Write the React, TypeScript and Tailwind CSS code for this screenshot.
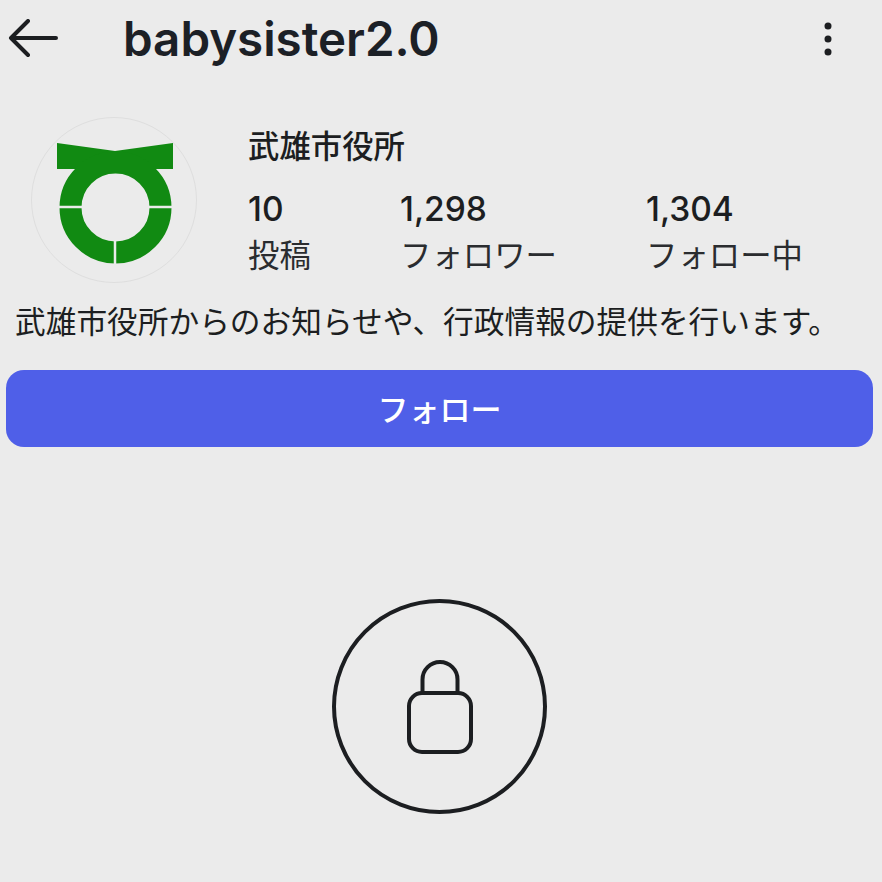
const FONT = "font-['Inter','Noto_Sans_CJK_JP',sans-serif]";

function Logo() {
  return (
    <svg viewBox="0 0 166 166" className="h-[166px] w-[166px]">
      <circle cx="83" cy="83" r="82.5" fill="none" stroke="#dedede" strokeWidth="1" />
      <path d="M26 26 L84 34 L142 26 V52 H26 Z" fill="#118a12" />
      <circle cx="84.5" cy="90.5" r="45" fill="none" stroke="#118a12" strokeWidth="22" />
      <path d="M26 90 H52 M117 90 H143 M84 124 V150" stroke="#ebebeb" strokeWidth="2.5" />
    </svg>
  );
}

function Stat({ value, label, width }: { value: string; label: string; width: string }) {
  return (
    <div className={`flex flex-col ${width}`}>
      <span className="text-[33.5px] leading-[40px] font-medium text-[#1c1e21]">{value}</span>
      <span className="mt-[5px] text-[31.4px] leading-[44px] text-[#2a2c2f]">{label}</span>
    </div>
  );
}

export default function App() {
  return (
    <div className={`flex h-[882px] w-[882px] flex-col overflow-hidden bg-[#ebebeb] ${FONT}`}>
      <header className="flex h-[78px] items-center pr-[50px] pl-[8px]">
        <svg viewBox="0 0 50 40" className="h-[40px] w-[50px]" fill="none" stroke="#1c1e21" strokeWidth="4" strokeLinecap="round" strokeLinejoin="round">
          <path d="M48 19 H3 M20 2 L3 19 L20 36" />
        </svg>
        <h1 className="ml-[65px] flex-1 text-[47.5px] leading-none font-semibold text-[#1c2026]">babysister2.0</h1>
        <svg viewBox="0 0 8 34" className="h-[34px] w-[8px]" fill="#1c1e21">
          <circle cx="4" cy="4" r="3.5" />
          <circle cx="4" cy="17" r="3.5" />
          <circle cx="4" cy="30" r="3.5" />
        </svg>
      </header>

      <section className="mt-[39px] flex h-[166px] pl-[31px]">
        <Logo />
        <div className="ml-[51px] flex flex-col pt-[12px]">
          <h2 className="text-[31.4px] leading-[36px] font-medium text-[#1c1e21]">武雄市役所</h2>
          <div className="mt-[24px] flex">
            <Stat value="10" label="投稿" width="w-[152px]" />
            <Stat value="1,298" label="フォロワー" width="w-[246px]" />
            <Stat value="1,304" label="フォロー中" width="w-[160px]" />
          </div>
        </div>
      </section>

      <p className="mt-[17px] pl-[15px] text-[30.7px] leading-[44px] whitespace-nowrap text-[#1c1e21]">
        武雄市役所からのお知らせや、行政情報の提供を行います。
      </p>

      <button className="mx-[6px] mt-[26px] h-[77px] w-[867px] rounded-[18px] bg-[#4f5fe8] pt-[3px] text-[31px] font-medium text-white">
        フォロー
      </button>

      <div className="mt-[152px] flex justify-center pr-[3px]">
        <div className="flex h-[215px] w-[215px] items-center justify-center rounded-full border-[4px] border-[#1c1e21]">
          <svg viewBox="0 0 70 94" className="h-[94px] w-[70px]" fill="none" stroke="#1c1e21" strokeWidth="4">
            <path d="M17.5 33 V19.5 A17.5 17.5 0 0 1 52.5 19.5 V33" />
            <rect x="4" y="33" width="62" height="59" rx="13" />
          </svg>
        </div>
      </div>
    </div>
  );
}
